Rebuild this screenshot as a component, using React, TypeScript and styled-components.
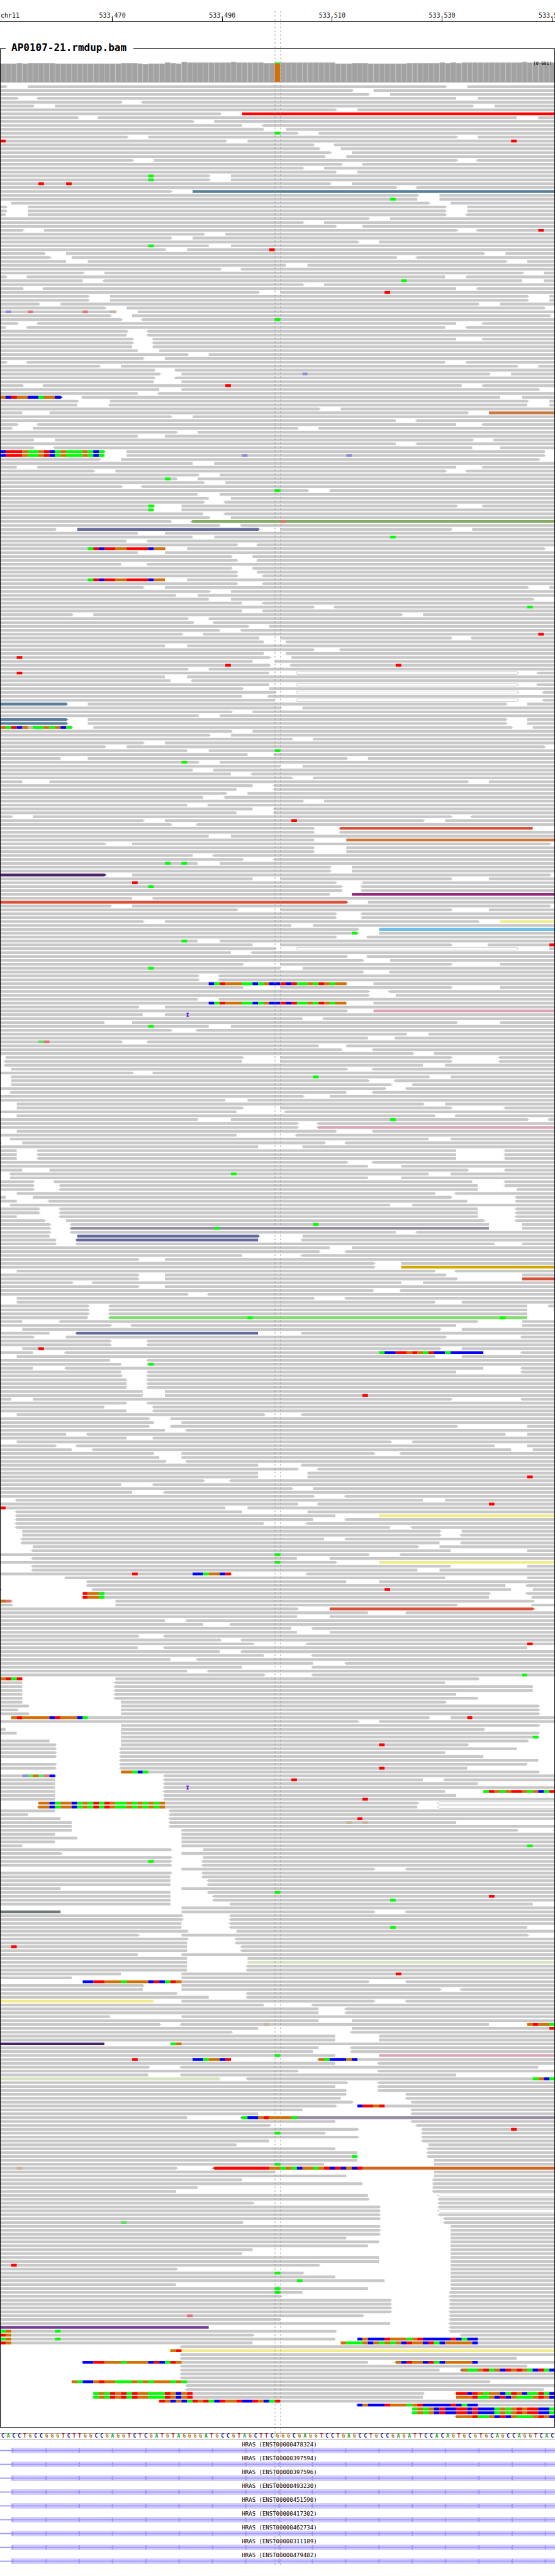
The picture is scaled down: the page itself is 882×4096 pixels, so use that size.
import React from 'react';
import styled, { createGlobalStyle } from 'styled-components';

const GlobalStyle = createGlobalStyle`
  * { box-sizing: border-box; }
  body { margin: 0; background: #fff; color: #000; }
`;

const MONO = '"DejaVu Sans Mono", monospace';
const BASES = 101;

/*
 * One line per alignment row. Tokens, in base units from the left edge:
 *   a-b  a>b  a-b<  a>b<   uncovered stretch; ">" and "<" mark strand arrows at its sides
 *   n:name                 the read starting at n takes a colour of its own
 *   n + letters            mismatched bases from n on; capitals are low quality, I is an insertion
 */
const READS = `1>5 81>85
64>68
67>71
3>7< 83-87
22>26<
6>10 86>90
61>65
40>44 44:red
14>18< 94-98
35>39
44-48<
48-52
50g 54>58
23>27 83>87
0r 41>45 93r
57>61<
58>62
60>64
59>63
24>28 83>87<
62>66
55>59
61>65
27g 38>42
27g 38>42
7r 12r 60>64
72>76<
31>35 35:steel
76>80
71g 76-80
0-2 78>82
1>5 81>85
1>5 81>85
1-5 81>85<
67>71
55>59
61>66
4>8 83>87< 98r
37>41
31>35
65>69
27g 38-42
30>34 49r
8>12 88>92
9>13 72>76<
12-16 92>96
52-56
40>44<
15>19 95>99
1>5< 81-85<
15-19< 73g 95-99
55>59
4>8< 83-87<
47>51 70r
16>20 96>100
16>20 96>100
7>11 87>91
19>23 99>101
1B 5R 15R 20O 21>25
20>24 100>101
22>26< 50g
3>7< 83-88<
1-5< 81-85<
23>27<
23-27<
24>28< 83-88<
24>28<
24-28<
25-29
34>38
26>30
1>5< 81-85<
18>22 94>98
28>32<
29>33 55B 89>93
28>32<
28-33
4>8< 41r 84-88<
29-33 98>101
25-29<
0:indigo 0obroobbgoob 11>15< 91-95
14>20 96>100
14-20< 96-100
58>62
4-9 85>89 89:copper
31>35
72-76<
3>7< 83-88<
2>6 54>58
32>36
25-30
6>10 86>90<
72-76<
6>10< 86-91
0brrroggorbgogggogbg 19>23 99>101
0brrroggorbgogggogbg 19-23 44B 63B 99>101
18>22 98>101
35-39
3-7< 83-88<
17>21 81>85<
36>40
30g 32>36
37>41
22>26<
50g 56>60
36-40
38-42
37>41<
27g 28>33 83>88<
27g 28-33
37-41<
38>42
31>35< 35:moss 51R
40-44<
10>14 14:slate 47>51 82>86
25-30
35-39 71g
23-27<
43>47<
16grbrroorrrrboo 30>34 99>101
25-30
42>46
43>47<
22-27<
42>46
43>47<
43>48<
16grbrroorrrrboo 30-34
43>48<
26>30 96>100
38>42
32-36
38-42 97>101
44-48<
57>61< 96g
44-48<
13>17 73>77
34>38
35>39<
45>49
40-44<
33>37 98r
47>51 82>86<
48-52
30-34
57>62<
48-52
3r 49>53
46-50
41r 49>53< 72r
34>38
3r 49-54 54:open 94>98<
30-34
31-35<
49-54 54:open 94>98<
44>49
50>54 54:open 94>99<
44-49<
50-54 54:open 94>99<
0:steel 12>16 92>96
51>55
42>46
36>40
0:steel 12>16 92>96
0:steel 12>16 92>96
0ogrboOggogobg 13>17 93>97
42>46
38>42
53>57
26>30
19>23 99>101
34-38 50g
45-50<
11-16 63>67
33g 36>40
51-55
35-39<
42-46<
53>57
4-9 85>89
46-50<
43-50<
41>45
37-41<
55>59
34-38<
46-50<
43-50<
2>6 82>86<
26>30 53r 77>81
31>36<
57>62< 62:brick 97-101
57>62<
38-42
57>63 63:copper
19>24 100>101
57>63
57>63
35-39<
44>50<
30g 33g 36-40
60>64
60>64
0:violet 19>24 100>101
46-51 82>89
24r 61>66
27g 62>66<
62>66<
60-64 64:magenta
24-28<
0:brick 63>67
20>24 100>101
43>51 82>89
61>66<
61>66<
26>30 87>91 91:yellow
53-57
65>69 69:sky
64g 65>69
61>67<
33g 36-40
46-51 82>89< 100r
50>54 54:open 94>100
42-46<
63>67<
66>71
44>51 82>91
27g 51-55
66>71<
36>40<
36>40<
38bgroooggbgobbrbrggogrogoo 63>68
44>51 82>91
67>71<
67>72
36-40<
38bgroooggbgobbrbrggogrogoo 63-68
25>30
63>68 68:pink
26-30 34I
55-59<
19-24 83>91
27g 38-42
31>36<
74-78
67-72<
7GR 22>27<
58-63
62>68<
75>79
0-1 44>51 82>91<
0-1< 44-51 82>91<
0-1< 77-81
0-2 63>68<
24>28<
0-2 57g 78>82
0-2 67>72<
0-2 71>75
70>74<
0-2< 63-68<
55>60
41-45
0-3 77>81
0-3 44>51 82>92<
43-52<
0-3 79>83<
36-42 71g 96>100<
54>58<
54>58< 58:pink
0-3 61>68<
43-54<
0-2< 78-82
0>4 59>63<
47-55
3-7< 83-92<
3-7< 83-92<
3-7< 83-92<
63>68<
67-73
4-9 85>92<
0-2< 42g 78-82
0-2< 67-73
6>10< 86-92<
6>11< 87-92<
6>11< 87-94
0-3 79>83<
1-6 82>94<
3-9< 85-94<
0-2< 71-75
7>11< 87-94<
7>11< 87-94<
3-11< 87-94<
8>12 88>94<
9>13< 57g 89-95
9>13< 13:mauve 39g 89-95
9>13< 72-76<
9-14 14:slate 47>55
10>14< 14:slate 47-55<
10>14< 90-95
60-64
58>63<
44-55<
25>30
68>73
68>73 73:gold
0-3 79>83<
25>30 81>95
25>30 83>95 95:brick
13>17< 73-77
25>30
68-73<
34>38<
0-3 57>63<
0-3 79>84
16>20< 96-100<
16>20< 96-101<
16>20< 96-101
16-20< 20:lime 45g 91g 96-101
4-11< 87-95
20>24< 83-95
0>4 80>84
9-14< 14:slate 47-55<
6>12 81>95<
20>27<
20>27<
0-4 7r 80>84
6-12< 69gbbrrorogrbbgbbbbbb 88-95<
0-3 79>84
20-27<
22-27< 27g
6-12< 88-95<
22-27< 83-95<
22>27<
23-27<
23-27<
23-27<
26-30
26-30 66r
2-6 82>95<
23-27<
19-28<
23-28<
0-3 48>55<
27>31
28-33
27>31 83>96
30-34<
12-16< 92-96
23-28<
0-3 71>75
10>14< 90-96
13-17< 93-97
28-33 68>73<
29-33
30>34<
47-55<
54>58<
47-56
47-56 96r
37>42<
22-28<
53>57
24-30<
57>63<
0-3< 77-81
54>58< 89r
0r 41-45
0-3< 44-56
0-3< 61-69 69:yellow
0-3< 57-63<
0-3< 48-56<
0-3< 71-75<
0-4 80>84
0-4 80>84<
0-4< 59-63<
0-4< 80-84<
0-6 76>80
0-6< 82-96
50g 67>73<
0-6< 54-60
50g 61>69 69:yellow
0-6< 82-96
0-6< 76-80
24r 35bbgoobr 42>56<
0-12< 81-96
0-16< 63-69
0-16< 92-96<
0>17< 70r 93-97
0-15 15roog 89>96<
0-15< 15roog 89-97<
0oR 2>21 97>101
2>21 83>97<
54>60 60:brick 97>101
67-74<
54-60
30-34<
37-42<
53-57<
54-60
25>30<
40>44<
46>56< 96r
25-30< 96-101
40-44<
48-57<
31-36<
57-63<
44-57<
34-38<
48>57< 95g
0orgr 4-21 87>101
4-21< 81-101
4-21< 97-101
4-21< 97-101
4-21< 83-101
4-21< 87-101
4-22 81>101
5>22 98>101
3>22 98>101
5>22 98>101
0-2 2orooooobrooobg 78>82 85r
65>69
0-22 98>101
1-22 88>101
3-22 98>101
0-22 97g 98>101
9-22 96>101
10>22 69r 85>101
10>22< 94-101
10>22< 81-101
10>22< 88-101
0>22< 98-101
10>22< 96-101
10>22< 69r 85-101
0-22 22oogbg 98>101
4BGoGRb 10>30<
10-30< 53r 77-81<
10-30< 87-101
10-30< 34I
10-30< 81-88 88grogorrogobgr
10-30< 83-101
10-30< 66r
0-7 7oobgoobgogrgroggogogogo 76>80< 80:open
0-7< 7oobgoobgogrgroggogogogo 76-80< 80:open
10-31<
5-31<
11-31< 65r
13-31< 63O 66O 83-101
13-31<
13-33 94>101<
10-33
14-33
10-33
4-33 96g
31>37
11>33
31>37
27g 31>37<
31>37<
0-33 68>74<
31>37<
31-37<
31-38<
31-38<
11-33
31-38< 50g
31-39< 89r
31-39< 71g
31-42< 97-101
0-33
0:ash 11-33 68>74<
33>42<
33>42<
33-42<
33-42< 71g 96-101
34>43
25>33 96>101
34>43<
34-43<
2r 34-44<
34-44<
25-33
34-45
34-45 45:sage
34-45<
34-45<
22-33 72r
13-33
0-15 15bbrrooogoooobrbgro 67>74<
26>33
26-33 80>84<
32>45<
38-45<
0:yellow 28-33 68>74<
48-57<
58-63<
58-63<
20-33
58-64
29>33< 48O 89-96 96oroog
47-64 100r
42>64<
61-69
61-69
0:violet 19-31 31go
58-64<
57-64<
50g 61-69 69:pink
24r 35bbgoobr 42-58< 58ogbbbob
61-69<
27>33< 98-101
54>69<
27-33< 83-101
0:sage 40-45< 97gobg
63>69<
61-69<
63-69<
63-74<
62-74<
64>75<
61>65 65brror
55-75<
47-75<
34-44< 44:mauve 44gbboroooog
61-75<
49>76<
65>77< 93r
50g 59>77<
65>77<
49-77<
43-78
61-78<
65-78<
64g 65-78<
65-79
50g 59-79
3O 32>39< 39:rust 39rrrrrrrrrroogogboogorbrbobr
50-79
63-79
44-79<
66-79<
36-79<
32-79<
67-80< 80:open
67>80<
46>80<
69>80<
69>80< 80:open
69>80<
69>81<
22G 44>81<
69>82
69>82
69>82
63-82
69-82
67-82
46-82
44-82
69-82
69-82
2r 58>82
32>82
50g 55>82
61-82
54g 70-82
32-82
50g 67-82
50g 55-82<
51>82<
71>82<
71>82<
71>82<
71>82<
34R 66>82<
51-82<
71-82<
0:purple 38-82<
0go 10g 61>82<
0ro 46>84<
0go 10g 61-65 65bobbbrooogorbbbbbrbgbb
0ro 46-62 62ogggobogogobroobrgbooooob
0-33<
0-31< 31:yellow 31or
0-33<
0-33< 94-101
0-15< 15bbrrooogoooobrbgro 67-72< 72obroobrgbooooob
0-33< 96-101
0-33< 80-84< 84:slate 84oggorgobrorogbrgb
0-33<
0-33<
0-13 13ogbboroogggogogooogog 89>101
0-34<
0-34< 99-101
0-17 17gogrorgroogggrobor 77>83< 83:amber 83rrbrogoobgrobggrgb
0-17< 17gogrorgroogggrobor 77-83 83ooorggobrbogggorob
0-29< 29robobgrorgbroorbbrobgr
0-65< 65bobbbrooogorbbbbbrbgbb
0-75 75gogobrbbrrbrbbbgogororrbbg
0-75< 75gogobrbbrrbrbbbgogororrbbg
0-83< 83ooorggobrbogggorob`.split('\n');

const READ_COLORS: Record<string, string> = {
  plain: '#c8c8c8',
  red: '#ff0000',
  steel: '#5a7f99',
  indigo: '#3a2a7a',
  copper: '#c87840',
  moss: '#87ab64',
  slate: '#646b9b',
  brick: '#d75138',
  violet: '#4a2468',
  magenta: '#902c7c',
  yellow: '#f1eb8a',
  sky: '#6bbde5',
  pink: '#dba4b4',
  mauve: '#968ca0',
  gold: '#d3a900',
  lime: '#82dc6e',
  ash: '#707a72',
  sage: '#d8e4bf',
  rust: '#cf6420',
  purple: '#753b94',
  amber: '#ecc850',
};

const BASE_COLORS: Record<string, string> = {
  g: '#00ff00',
  r: '#ff0000',
  b: '#0000ff',
  o: '#d17105',
  G: '#62e062',
  R: '#e07575',
  B: '#8c8cdc',
  O: '#c8b49c',
};

/* [columns, top of the bar] */
const COVERAGE: [number, number][] = [
  [3, 115], [1, 114], [1, 115], [5, 114], [12, 115], [3, 114], [1, 115], [1, 116], [3, 115],
  [1, 113], [1, 114], [1, 115], [1, 112], [8, 113], [1, 112], [5, 113], [2, 114], [11, 113],
  [3, 115], [3, 114], [7, 115], [6, 114], [1, 113], [1, 114], [1, 113], [1, 114], [11, 113],
  [1, 112], [5, 113],
];
const VARIANT_COLUMN = 50;

const SEQUENCE =
  'CACCTGCCGGGTCTTGGCCGAGGTCTCGATGTAGGGGATGCCGTAGCTTCG' +
  'GGCGAGGTCCTGAGCCTGCCGAGATTCCACAGTGCGTGCAGCCAGGTCAC';

const TRANSCRIPTS = [
  'ENST00000478324', 'ENST00000397594', 'ENST00000397596', 'ENST00000493230', 'ENST00000451590',
  'ENST00000417302', 'ENST00000462734', 'ENST00000311189', 'ENST00000479482',
];

const TICKS = ['533,470', '533,490', '533,510', '533,530', '533,550'];

const baseX = (n: number) => Math.round(n * 9.9);

interface Segment {
  from: number;
  to: number;
  left: boolean;
  right: boolean;
  color: string;
}
interface Mark {
  from: number;
  to: number;
  kind: string;
}

function parseRow(row: string) {
  const colors: Record<number, string> = {};
  const marks: Mark[] = [];
  const segments: Segment[] = [];
  let start = 0;
  let left = false;
  const close = (to: number, right: boolean) => {
    if (to > start || left || right) segments.push({ from: start, to, left, right, color: 'plain' });
  };
  row.split(' ').forEach((token) => {
    const gap = /^(\d+)([->])(\d+)(<?)$/.exec(token);
    const read = /^(\d+):(\w+)$/.exec(token);
    const bases = /^(\d+)([a-zA-Z]+)$/.exec(token);
    if (gap) {
      close(Number(gap[1]), gap[2] === '>');
      start = Number(gap[3]);
      left = gap[4] === '<';
    } else if (read) {
      colors[Number(read[1])] = read[2];
    } else if (bases) {
      let at = Number(bases[1]);
      (bases[2].match(/(.)\1*/g) || []).forEach((run) => {
        marks.push({ from: at, to: at + run.length, kind: run[0] });
        at += run.length;
      });
    }
  });
  close(BASES, false);
  segments.forEach((s) => {
    s.color = colors[s.from] || 'plain';
  });
  return { segments, marks };
}

function readPath({ from, to, left, right }: Segment, y: number) {
  const a = baseX(from);
  const b = baseX(to);
  const head = right
    ? `L${b + 2} ${y + 1}V${y + 2}H${b + 4}V${y + 3}H${b + 2}V${y + 4}L${b} ${y + 5}`
    : `V${y + 5}`;
  const tail = left
    ? `L${a - 2} ${y + 4}V${y + 3}H${a - 4}V${y + 2}H${a - 2}V${y + 1}Z`
    : 'Z';
  return `M${a} ${y}H${b}${head}H${a}${tail}`;
}

function ReadRow({ row, y }: { row: string; y: number }) {
  const { segments, marks } = parseRow(row);
  return (
    <g>
      {segments.map((s) =>
        s.color === 'open' ? (
          <path key={s.from} d={readPath(s, y)} fill="#fff" stroke="#c8c8c8" />
        ) : (
          <path key={s.from} d={readPath(s, y)} fill={READ_COLORS[s.color]} />
        ),
      )}
      {marks.map((m) =>
        m.kind === 'I' ? (
          <path
            key={m.from}
            fill="#7814dc"
            d={`M${baseX(m.from) - 1} ${y - 1}h4v2h-1v3h1v2h-4v-2h1v-3h-1z`}
          />
        ) : (
          <rect
            key={m.from}
            x={baseX(m.from)}
            y={y}
            width={baseX(m.to) - baseX(m.from)}
            height={5}
            fill={BASE_COLORS[m.kind]}
          />
        ),
      )}
    </g>
  );
}

const Page = styled.main`
  position: relative;
  width: 100%;
  min-height: 100vh;
  padding-bottom: 19px;
  overflow: hidden;
  background: #fff;
  font-family: ${MONO};
`;

const Ruler = styled.header`
  display: flex;
  height: 35px;
  border-bottom: 1px solid #000;
  overflow: hidden;
  font-size: 10px;
  line-height: 12px;
`;

const Chromosome = styled.div`
  flex: 0 0 10.35%;
  padding: 19px 0 0 1px;
`;

const TickCell = styled.div`
  flex: 0 0 19.8%;
  display: flex;
  flex-direction: column;
  align-items: center;
  justify-content: flex-end;
  color: #111;

  &::after {
    content: '';
    width: 1px;
    height: 6px;
    margin-top: -3px;
    background: #000;
  }
`;

const Track = styled.fieldset`
  min-width: 0;
  margin: 32px 0 0;
  padding: 0;
  border: 1px solid #000;
`;

const TrackName = styled.legend`
  margin-left: 8px;
  padding: 0 11px 3px 9px;
  font-size: 16px;
  font-weight: 700;
  line-height: 17px;
`;

const Coverage = styled.div`
  position: relative;
`;

const Range = styled.span`
  position: absolute;
  top: 9px;
  right: 4px;
  font-size: 7px;
  line-height: 10px;
`;

const Chart = styled.svg<{ $ratio: string }>`
  display: block;
  width: 100%;
  aspect-ratio: ${(p) => p.$ratio};
`;

const SequenceTrack = styled.div`
  display: grid;
  grid-template-columns: repeat(101, 1fr);
  margin-top: 9px;
  border: solid #aaa;
  border-width: 1px 0;
  font-size: 8px;
  font-weight: 700;
  line-height: 8px;
  text-align: center;
`;

const LETTER_COLORS: Record<string, string> = {
  A: '#1d9a1d',
  C: '#14148c',
  G: '#b0762a',
  T: '#a81414',
};

const Letter = styled.span<{ $base: string }>`
  color: ${(p) => LETTER_COLORS[p.$base]};
`;

const TranscriptList = styled.ul`
  margin: 0;
  padding: 0;
  list-style: none;
`;

const Transcript = styled.li`
  padding-top: 4px;
  font-size: 9px;
  line-height: 9px;
  text-align: center;
`;

const TranscriptName = styled.span`
  display: block;
  padding-left: 6px;
`;

const TranscriptBar = styled.svg`
  display: block;
  width: 100%;
  height: 9px;
`;

const Guides = styled.svg`
  position: absolute;
  top: 0;
  left: 0;
  width: 100%;
  height: 100%;
  pointer-events: none;
`;

function CoverageBars() {
  const tops = COVERAGE.flatMap(([count, top]) => Array<number>(count).fill(top));
  return (
    <Coverage>
      <Chart $ratio="880 / 45" viewBox="1 99 998 51" preserveAspectRatio="none" aria-label="Coverage">
        {tops.map((top, i) => {
          const x = baseX(i);
          const w = baseX(i + 1) - x;
          if (i === VARIANT_COLUMN) {
            return (
              <g key={i}>
                <rect x={x} y={113} width={w} height={2} fill="#00ff00" />
                <rect x={x} y={115} width={w} height={33} fill="#d17105" />
              </g>
            );
          }
          return (
            <g key={i}>
              <rect x={x} y={top} width={w} height={148 - top} fill="#b0b0b0" />
              <rect x={x + 1} y={top + 1} width={w - 2} height={147 - top} fill="#a2a2a2" />
            </g>
          );
        })}
        <rect x={0} y={148} width={1000} height={1} fill="#777" />
      </Chart>
      <Range>[0-601]</Range>
    </Coverage>
  );
}

const ARROWS = Array.from({ length: 17 }, (_, i) => 20 + i * 60);

export default function App() {
  return (
    <>
      <GlobalStyle />
      <Page>
        <Ruler>
          <Chromosome>chr11</Chromosome>
          {TICKS.map((t) => (
            <TickCell key={t}>{t}</TickCell>
          ))}
        </Ruler>
        <Track>
          <TrackName>AP0107-21.rmdup.bam</TrackName>
          <CoverageBars />
          <Chart
            $ratio="880 / 3727"
            viewBox="1 150 998 4225"
            preserveAspectRatio="none"
            aria-label="Aligned reads"
          >
            {READS.map((row, i) => (
              <ReadRow key={i} row={row} y={154 + i * 7} />
            ))}
          </Chart>
        </Track>
        <SequenceTrack>
          {SEQUENCE.split('').map((b, i) => (
            <Letter key={i} $base={b}>
              {b}
            </Letter>
          ))}
        </SequenceTrack>
        <TranscriptList>
          {TRANSCRIPTS.map((id) => (
            <Transcript key={id}>
              <TranscriptName>HRAS ({id})</TranscriptName>
              <TranscriptBar viewBox="0 0 1000 10" preserveAspectRatio="none" aria-hidden="true">
                <rect x={20} y={0} width={980} height={10} fill="#d3ccff" />
                <rect x={0} y={4} width={1000} height={2} fill="#9c98fe" />
                {ARROWS.map((x) => (
                  <path key={x} d={`M${x} 5l3-4h1v8h-1z`} fill="#9c98fe" />
                ))}
              </TranscriptBar>
            </Transcript>
          ))}
        </TranscriptList>
        <Guides viewBox="0 0 1000 4642" preserveAspectRatio="none" aria-hidden="true">
          <path d="M495.5 20V4622M505.5 20V4622" stroke="#949494" strokeDasharray="3 4" fill="none" />
        </Guides>
      </Page>
    </>
  );
}
